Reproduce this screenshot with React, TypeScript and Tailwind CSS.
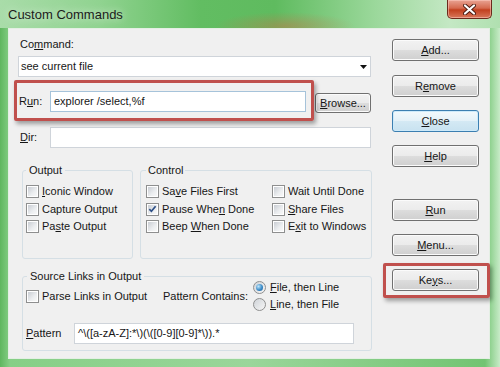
import type { ReactNode } from 'react'

function U({ children }: { children: ReactNode }) {
  return <span className="underline underline-offset-[1px]">{children}</span>
}

function Box({ checked }: { checked?: boolean }) {
  return (
    <span className="flex h-[13px] w-[13px] shrink-0 border border-[#8e8f8f] bg-white p-[1px]">
      <span className="flex h-full w-full items-center justify-center bg-[linear-gradient(135deg,#c9cdd3,#eceef0_60%,#f8f8f8)]">
        {checked && (
          <svg width="9" height="8" viewBox="0 0 9 8">
            <path d="M1.3 4.2 L3.4 6.3 L7.6 1.2" fill="none" stroke="#2d4f86" strokeWidth="1.7" />
          </svg>
        )}
      </span>
    </span>
  )
}

function Check({ children, checked }: { children: ReactNode; checked?: boolean }) {
  return (
    <div className="flex h-[17.5px] items-center gap-[3px]">
      <Box checked={checked} />
      <span>{children}</span>
    </div>
  )
}

function Radio({ children, on }: { children: ReactNode; on?: boolean }) {
  return (
    <div className="flex h-[17px] items-center gap-[4px]">
      <span className="flex h-[13px] w-[13px] shrink-0 items-center justify-center rounded-full border border-[#8e8f8f] bg-[linear-gradient(135deg,#cfd3d8,#f6f6f6)]">
        {on && <span className="h-[7px] w-[7px] rounded-full bg-[radial-gradient(circle_at_35%_35%,#bfe6fb,#3d8cc8_55%,#1b5b97)]" />}
      </span>
      <span>{children}</span>
    </div>
  )
}

function Btn({ children, main }: { children: ReactNode; main?: boolean }) {
  return (
    <div
      className={
        main
          ? 'flex h-[22px] w-[87px] items-center justify-center rounded-[3px] border border-[#3c7fb1] bg-[linear-gradient(#f3f9fc,#e4f1f8_50%,#d4e9f4_51%,#c8e2f0)] shadow-[inset_0_0_0_1px_#cdeafa]'
          : 'flex h-[22px] w-[87px] items-center justify-center rounded-[3px] border border-[#707070] bg-[linear-gradient(#f2f2f2,#ebebeb_50%,#dddddd_51%,#cfcfcf)] shadow-[inset_0_0_0_1px_#fbfbfb]'
      }
    >
      {children}
    </div>
  )
}

export default function App() {
  return (
    <div className="relative flex h-[367px] w-[500px] flex-col overflow-hidden bg-[linear-gradient(90deg,#5fb65f,#86cf86_2%,#9ad69a_50%,#72c472_97%,#c8ebc8)] font-['Liberation_Sans',Arial,sans-serif] text-[11px] leading-[13px] text-[#161616]">
      {/* title bar */}
      <div className="flex h-[28px] shrink-0 items-start justify-between bg-[radial-gradient(ellipse_70px_14px_at_285px_26px,rgba(205,110,70,0.45),transparent),linear-gradient(90deg,#a9dca9,#90d390_20%,#62bd62_40%,#5fbb5f_55%,#9bd89b_75%,#c4e8c4_90%,#b0e0b0)] pl-[8px] pr-[8px]">
        <span className="pt-[7px] text-[13px] leading-[16px] text-[#1c1c1c] [text-shadow:0_0_8px_rgba(255,255,255,0.8)]">
          Custom Commands
        </span>
        <div className="flex h-[19px] w-[45px] items-center justify-center rounded-b-[5px] border border-t-0 border-[#6b2a1c] bg-[linear-gradient(#e9a393,#d56a4f_45%,#c2401f_55%,#d8775a)] shadow-[inset_0_0_0_1px_rgba(255,210,200,0.5)]">
          <svg width="13" height="11" viewBox="0 0 13 11">
            <path d="M2 1.5 L11 9.5 M11 1.5 L2 9.5" stroke="#4a1a10" strokeWidth="4" strokeLinecap="round" />
            <path d="M2 1.5 L11 9.5 M11 1.5 L2 9.5" stroke="#ffffff" strokeWidth="2.2" strokeLinecap="round" />
          </svg>
        </div>
      </div>

      {/* client area */}
      <div className="ml-[8px] flex h-[331px] w-[482px] border border-[#e4efe4] bg-[#f0f0f0]">
        {/* left column */}
        <div className="flex w-[363px] flex-col pl-[9px] pt-[9px]">
          <div className="pl-[2px]">
            Co<U>m</U>mand:
          </div>
          <div className="mt-[5px] flex h-[21px] w-[353px] items-center justify-between border border-[#cfd4da] bg-white pl-[2px] pr-[3px]">
            <span>see current file</span>
            <svg width="7" height="4" viewBox="0 0 7 4">
              <path d="M0 0H7L3.5 4Z" fill="#111" />
            </svg>
          </div>

          <div className="mt-[14px] flex h-[22px] items-start">
            <span className="w-[32px] pt-[4px] pl-[1px]">
              R<U>u</U>n:
            </span>
            <div className="flex h-[21px] w-[256px] items-center border border-[#a6c3da] bg-white pl-[3px]">
              explorer /select,%f
            </div>
            <div className="ml-[9px] mt-[2px] flex h-[20px] w-[56px] items-center justify-center rounded-[3px] border border-[#707070] bg-[linear-gradient(#f2f2f2,#ebebeb_50%,#dddddd_51%,#cfcfcf)] shadow-[inset_0_0_0_1px_#fbfbfb]">
              <span>
                <U>B</U>rowse...
              </span>
            </div>
          </div>

          <div className="mt-[14px] flex h-[21px] items-center">
            <span className="w-[32px] pl-[2px]">
              <U>D</U>ir:
            </span>
            <div className="h-[21px] w-[321px] border border-[#cfd4da] bg-white" />
          </div>

          <div className="ml-[4px] mt-[16px] flex">
            <fieldset className="h-[95px] w-[111px] rounded-[3px] border border-[#d5dfe5] pl-[3px]">
              <legend className="px-[3px]">Output</legend>
              <div className="pt-[6px]">
                <Check>
                  <U>I</U>conic Window
                </Check>
                <Check>Capture Output</Check>
                <Check>
                  Pa<U>s</U>te Output
                </Check>
              </div>
            </fieldset>
            <fieldset className="ml-[7px] h-[95px] w-[232px] rounded-[3px] border border-[#d5dfe5] pl-[5px]">
              <legend className="px-[2px]">Control</legend>
              <div className="flex pt-[6px]">
                <div className="w-[126px]">
                  <Check>
                    Sa<U>v</U>e Files First
                  </Check>
                  <Check checked>
                    Pause Whe<U>n</U> Done
                  </Check>
                  <Check>
                    Beep <U>W</U>hen Done
                  </Check>
                </div>
                <div>
                  <Check>Wait Until Done</Check>
                  <Check>
                    <U>S</U>hare Files
                  </Check>
                  <Check>
                    E<U>x</U>it to Windows
                  </Check>
                </div>
              </div>
            </fieldset>
          </div>

          <fieldset className="ml-[4px] mt-[11px] h-[81px] w-[350px] rounded-[3px] border border-[#d5dfe5] pl-[3px]">
            <legend className="ml-[1px] px-[3px]">Source Links in Output</legend>
            <div className="-mt-[4px] flex h-[34px] items-center">
              <div className="w-[137px]">
                <Check>Parse Links in Output</Check>
              </div>
              <span className="w-[90px]">Pattern Contains:</span>
              <div>
                <Radio on>
                  <U>F</U>ile, then Line
                </Radio>
                <Radio>
                  <U>L</U>ine, then File
                </Radio>
              </div>
            </div>
            <div className="mt-[10px] flex h-[21px] items-center">
              <span className="w-[48px]">
                <U>P</U>attern
              </span>
              <div className="flex h-[21px] w-[280px] items-center border border-[#cfd4da] bg-white pl-[3px]">
                ^\([a-zA-Z]:*\)(\([0-9][0-9]*\)).*
              </div>
            </div>
          </fieldset>
        </div>

        {/* right column */}
        <div className="ml-[20px] flex flex-col pt-[10px]">
          <Btn>
            <U>A</U>dd...
          </Btn>
          <div className="mt-[14px]">
            <Btn>
              R<U>e</U>move
            </Btn>
          </div>
          <div className="mt-[13px]">
            <Btn main>
              <U>C</U>lose
            </Btn>
          </div>
          <div className="mt-[13px]">
            <Btn>
              <U>H</U>elp
            </Btn>
          </div>
          <div className="mt-[32px]">
            <Btn>
              <U>R</U>un
            </Btn>
          </div>
          <div className="mt-[13px]">
            <Btn>
              <U>M</U>enu...
            </Btn>
          </div>
          <div className="mt-[13px]">
            <Btn>
              Ke<U>y</U>s...
            </Btn>
          </div>
        </div>
      </div>

      {/* red annotation frames */}
      <div className="absolute left-[14px] top-[80px] h-[41px] w-[300px] rounded-[2px] border-[3px] border-[#c0504d] shadow-[2px_3px_4px_rgba(0,0,0,0.35)]" />
      <div className="absolute left-[383px] top-[263px] h-[35px] w-[107px] rounded-[2px] border-[3px] border-[#c0504d] shadow-[2px_3px_4px_rgba(0,0,0,0.35)]" />
    </div>
  )
}
